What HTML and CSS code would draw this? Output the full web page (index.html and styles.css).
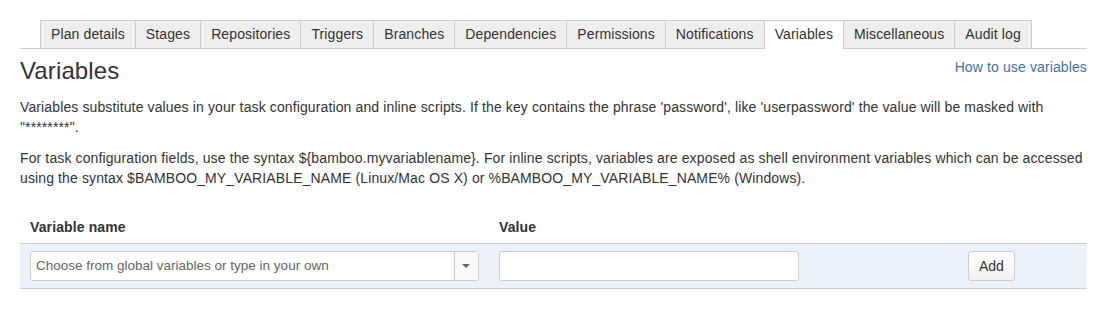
FILE: index.html
```html
<!DOCTYPE html>
<html lang="en">
<head>
    <meta charset="UTF-8">
    <title>Variables</title>
    <link rel="stylesheet" href="styles.css">
</head>
<body>
    <div class="page">
        <ul class="tabs">
            <li class="tab">Plan details</li>
            <li class="tab">Stages</li>
            <li class="tab">Repositories</li>
            <li class="tab">Triggers</li>
            <li class="tab">Branches</li>
            <li class="tab">Dependencies</li>
            <li class="tab">Permissions</li>
            <li class="tab">Notifications</li>
            <li class="tab active">Variables</li>
            <li class="tab">Miscellaneous</li>
            <li class="tab">Audit log</li>
        </ul>

        <div class="header">
            <h1>Variables</h1>
            <a href="#" class="help-link">How to use variables</a>
        </div>

        <p>Variables substitute values in your task configuration and inline scripts. If the key contains the phrase 'password', like 'userpassword' the value will be masked with "********".</p>
        <p>For task configuration fields, use the syntax ${bamboo.myvariablename}. For inline scripts, variables are exposed as shell environment variables which can be accessed using the syntax $BAMBOO_MY_VARIABLE_NAME (Linux/Mac OS X) or %BAMBOO_MY_VARIABLE_NAME% (Windows).</p>

        <div class="var-table">
            <div class="var-head">
                <div class="col-name">Variable name</div>
                <div class="col-value">Value</div>
            </div>
            <div class="var-row">
                <div class="col-name">
                    <div class="combo">
                        <span class="combo-text">Choose from global variables or type in your own</span>
                        <span class="combo-arrow"></span>
                    </div>
                </div>
                <div class="col-value">
                    <input type="text" class="value-input">
                </div>
                <div class="col-action">
                    <button class="btn">Add</button>
                </div>
            </div>
        </div>
    </div>
</body>
</html>
```

FILE: styles.css
```css
body {
    font-family: 'Liberation Sans', Arial, sans-serif;
    font-size: 14px;
    letter-spacing: 0.12px;
    margin: 0;
    padding: 0;
    color: #333;
    background: #fff;
}
.page {
    padding: 20px 20px 0 20px;
}
.tabs {
    display: flex;
    list-style: none;
    margin: 0;
    padding: 0 0 0 20px;
    border-bottom: 1px solid #ccc;
    height: 28px;
}
.tab {
    background-color: #eee;
    border: 1px solid #ccc;
    border-bottom: none;
    border-right: none;
    padding: 0 10px;
    line-height: 27px;
    height: 27px;
    color: #333;
}
.tab:last-child {
    border-right: 1px solid #ccc;
}
.tab.active {
    background-color: #fff;
    height: 28px;
}
.header {
    display: flex;
    justify-content: space-between;
    align-items: flex-start;
    margin-top: 7px;
}
h1 {
    font-size: 24px;
    font-weight: normal;
    margin: 0;
    line-height: 30px;
}
.help-link {
    color: #3b73af;
    text-decoration: none;
    margin-top: 3px;
}
p {
    margin: 11px 0 0 0;
    line-height: 20px;
}
p + p {
    margin-top: 11px;
}
.var-table {
    margin-top: 23px;
}
.var-head {
    display: flex;
    font-weight: bold;
    padding: 8px 10px 8px 10px;
    line-height: 16px;
    border-bottom: 1px solid #ccc;
}
.var-row {
    display: flex;
    align-items: center;
    padding: 7px 10px;
    background-color: #ebf2f9;
    border-bottom: 1px solid #ccc;
}
.col-name {
    width: 449px;
    margin-right: 20px;
}
.col-value {
    width: 449px;
}
.col-action {
    margin-left: 20px;
}
.combo {
    display: flex;
    height: 30px;
    box-sizing: border-box;
    border: 1px solid #ccc;
    border-radius: 3px;
    background: #fff;
}
.combo-text {
    flex: 1;
    font-size: 13.5px;
    letter-spacing: 0;
    line-height: 28px;
    padding-left: 5px;
    color: #666;
}
.combo-arrow {
    width: 23px;
    border-left: 1px solid #ccc;
    background: #fafafa;
    position: relative;
}
.combo-arrow::after {
    content: "";
    position: absolute;
    left: 7px;
    top: 12px;
    border-left: 4px solid transparent;
    border-right: 4px solid transparent;
    border-top: 4px solid #666;
}
.value-input {
    width: 300px;
    height: 30px;
    box-sizing: border-box;
    border: 1px solid #ccc;
    border-radius: 3px;
    background: #fff;
    margin: 0;
}
.btn {
    font-family: 'Liberation Sans', Arial, sans-serif;
    font-size: 14px;
    color: #333;
    height: 30px;
    padding: 0 10px;
    border: 1px solid #ccc;
    border-radius: 3px;
    background: linear-gradient(#fff, #f2f2f2);
}
```
